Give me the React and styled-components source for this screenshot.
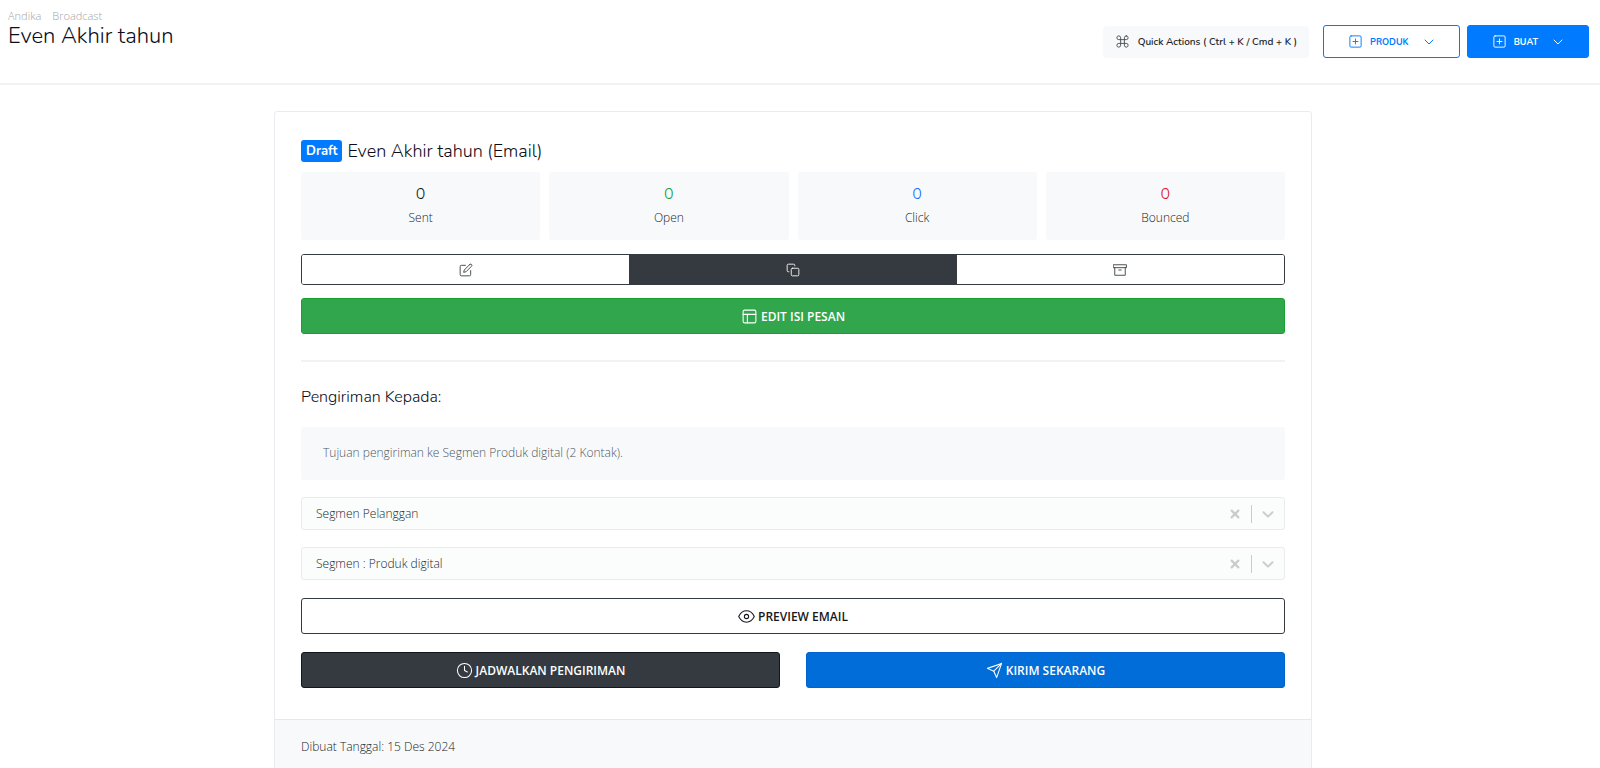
import { useState } from "react";
import styled, { createGlobalStyle } from "styled-components";
import {
  FiArchive,
  FiChevronDown,
  FiClock,
  FiCommand,
  FiCopy,
  FiEdit,
  FiEye,
  FiLayout,
  FiPlusSquare,
  FiSend,
} from "react-icons/fi";

const GlobalStyle = createGlobalStyle`
  * { box-sizing: border-box; }
  body {
    margin: 0;
    background: #fff;
    color: #212529;
    font-family: "Open Sans", "Noto Sans", sans-serif;
    font-size: 12px;
    font-weight: 300;
    line-height: 18px;
  }
  h1, h2, h3, p { margin: 0; }
  button, select { font-family: inherit; }
  button { cursor: pointer; }
  svg { display: block; flex: none; }
`;

const headingFont = `"Nunito", "Open Sans", sans-serif`;

const Header = styled.header`
  display: flex;
  justify-content: space-between;
  align-items: flex-start;
  padding: 8px 11px 25px 8px;
  border-bottom: 2px solid #f1f3f6;
`;
const Breadcrumb = styled.nav`
  display: flex;
  gap: 11px;
  font-size: 11px;
  line-height: 16px;

  & > a { color: #a3a4a8; text-decoration: none; }
`;
const PageTitle = styled.h1`
  font-family: ${headingFont};
  font-size: 22px;
  line-height: 24px;
  font-weight: 300;
  color: #0b0c18;
`;
const HeaderActions = styled.div`
  display: flex;
  align-items: center;
  padding-top: 17px;
`;
const QuickButton = styled.button`
  display: flex;
  align-items: center;
  gap: 8px;
  height: 32px;
  margin-right: 14px;
  padding: 0 12px;
  border: 0;
  border-radius: 4px;
  background: #f8f9fa;
  color: #212529;
  font-family: ${headingFont};
  font-size: 10px;
  font-weight: 600;

  & > svg { color: #495057; }
`;
const MenuButton = styled.button`
  display: flex;
  align-items: center;
  gap: 7px;
  height: 33px;
  margin-left: ${p => p.$filled ? '7px' : '0'};
  padding: 0 22px 0 24px;
  border: 1px solid #007bff;
  border-radius: 3px;
  background: ${p => p.$filled ? '#007bff' : '#fff'};
  color: ${p => p.$filled ? '#fff' : '#007bff'};
  font-family: ${headingFont};
  font-size: 9px;
  font-weight: 700;

  & > svg:last-child { margin-left: 5px; }
`;

const Main = styled.main`
  padding: 26px 14px 0 0;
`;
const Card = styled.section`
  max-width: 1038px;
  margin: 0 auto;
  border: 1px solid #e8ebf0;
  border-radius: 3px;
`;
const CardBody = styled.div`
  padding: 24px 26px 31px;
`;
const TitleRow = styled.div`
  display: flex;
  align-items: center;
  gap: 5px;
  height: 30px;
`;
const Badge = styled.span`
  padding: 2px 5px;
  border-radius: 3px;
  background: #007bff;
  color: #fff;
  font-family: ${headingFont};
  font-size: 13px;
  font-weight: 700;
`;
const CardTitle = styled.h2`
  font-family: ${headingFont};
  font-size: 18px;
  line-height: 24px;
  font-weight: 300;
  color: #0b0c18;
`;
const Stats = styled.div`
  display: grid;
  grid-template-columns: repeat(4, 1fr);
  gap: 9px;
  margin-top: 6px;
`;
const Stat = styled.div`
  height: 68px;
  padding-top: 10px;
  border-radius: 3px;
  background: #f8f9fb;
  text-align: center;
`;
const StatValue = styled.p`
  font-family: ${headingFont};
  font-size: 16px;
  line-height: 24px;
  color: ${p => p.$color};
`;
const StatLabel = styled.p`
  margin-top: 3px;
`;
const ButtonGroup = styled.div`
  display: grid;
  grid-template-columns: repeat(3, 1fr);
  height: 31px;
  margin-top: 14px;
  border: 1px solid #343a40;
  border-radius: 3px;
  overflow: hidden;
`;
const GroupButton = styled.button`
  display: flex;
  align-items: center;
  justify-content: center;
  padding: 0;
  border: 0;
  background: ${p => p.$active ? '#343a40' : '#fff'};
  color: ${p => p.$active ? '#fff' : '#343a40'};
`;

const tones = {
  success: { bg: '#31a64c', border: '#16a02c', color: '#fff' },
  outline: { bg: '#fff', border: '#343a40', color: '#16181b' },
  dark: { bg: '#343a40', border: '#14171c', color: '#fff' },
  primary: { bg: '#006dd9', border: '#0064d0', color: '#fff' },
};
const WideButton = styled.button`
  display: flex;
  align-items: center;
  justify-content: center;
  gap: 3px;
  width: 100%;
  height: 36px;
  padding: 0;
  border: 1px solid ${p => tones[p.$tone].border};
  border-radius: 3px;
  background: ${p => tones[p.$tone].bg};
  color: ${p => tones[p.$tone].color};
  font-size: 12px;
  font-weight: 600;
`;
const EditRow = styled.div`
  margin-top: 13px;
  padding-bottom: 26px;
  border-bottom: 2px solid #f1f2f4;
`;
const SectionTitle = styled.h3`
  margin: 24px 0 19px;
  font-family: ${headingFont};
  font-size: 16px;
  line-height: 22px;
  font-weight: 300;
  color: #0b0c18;
`;
const Notice = styled.p`
  padding: 17px 22px 18px;
  border-radius: 3px;
  background: #f8f9fb;
  color: #4f575e;
`;
const SelectBox = styled.div`
  display: flex;
  align-items: center;
  gap: 6px;
  height: 33px;
  margin-top: 17px;
  padding-right: 6px;
  border: 1px solid #e9ebed;
  border-radius: 3px;
  background: #fbfdfc;
  color: #ccc;
`;
const Select = styled.select`
  flex: 1;
  min-width: 0;
  height: 100%;
  padding: 0 0 0 14px;
  border: 0;
  appearance: none;
  background: transparent;
  color: #212529;
  font-size: 12px;
  font-weight: 300;
`;
const ClearButton = styled.button`
  padding: 0;
  border: 0;
  background: none;
  color: inherit;
`;
const Separator = styled.span`
  width: 1px;
  height: 18px;
  background: #ccc;
`;
const Actions = styled.div`
  display: grid;
  grid-template-columns: repeat(2, 1fr);
  gap: 18px 26px;
  margin-top: 18px;

  & > :first-child { grid-column: 1 / -1; }
`;
const CardFooter = styled.footer`
  padding: 18px 26px;
  border-top: 1px solid #e4e8ec;
  background: #f8f9fb;
`;

const stats = [
  { label: 'Sent', value: 0, color: '#16181b' },
  { label: 'Open', value: 0, color: '#16a02c' },
  { label: 'Click', value: 0, color: '#1a6dff' },
  { label: 'Bounced', value: 0, color: '#dc1420' },
];

function SegmentSelect({ label, option }) {
  const [value, setValue] = useState(option);

  return (
    <SelectBox>
      <Select aria-label={label} value={value} onChange={(e) => setValue(e.target.value)}>
        <option value="" />
        <option value={option}>{option}</option>
      </Select>
      <ClearButton type="button" aria-label="Hapus" onClick={() => setValue('')}>
        <svg width="20" height="20" viewBox="0 0 20 20" fill="none" stroke="currentColor" strokeWidth="2.2" strokeLinecap="round">
          <path d="M6.6 6.6l6.8 6.8M13.4 6.6l-6.8 6.8" />
        </svg>
      </ClearButton>
      <Separator />
      <svg width="20" height="20" viewBox="0 0 20 20" fill="none" stroke="currentColor" strokeWidth="2" strokeLinecap="round" strokeLinejoin="round">
        <path d="M5.5 8.3l4.5 4.3 4.5-4.3" />
      </svg>
    </SelectBox>
  );
}

function App() {
  return (
    <>
      <GlobalStyle />
      <Header>
        <div>
          <Breadcrumb>
            <a href="#andika">Andika</a>
            <a href="#broadcast">Broadcast</a>
          </Breadcrumb>
          <PageTitle>Even Akhir tahun</PageTitle>
        </div>
        <HeaderActions>
          <QuickButton type="button">
            <FiCommand size={15} strokeWidth={1.5} />
            Quick Actions ( Ctrl + K / Cmd + K )
          </QuickButton>
          <MenuButton type="button">
            <FiPlusSquare size={15} strokeWidth={1.5} />
            PRODUK
            <FiChevronDown size={16} strokeWidth={1.5} />
          </MenuButton>
          <MenuButton type="button" $filled>
            <FiPlusSquare size={15} strokeWidth={1.5} />
            BUAT
            <FiChevronDown size={16} strokeWidth={1.5} />
          </MenuButton>
        </HeaderActions>
      </Header>

      <Main>
        <Card>
          <CardBody>
            <TitleRow>
              <Badge>Draft</Badge>
              <CardTitle>Even Akhir tahun (Email)</CardTitle>
            </TitleRow>

            <Stats>
              {stats.map((s) => (
                <Stat key={s.label}>
                  <StatValue $color={s.color}>{s.value}</StatValue>
                  <StatLabel>{s.label}</StatLabel>
                </Stat>
              ))}
            </Stats>

            <ButtonGroup>
              <GroupButton type="button" aria-label="Edit"><FiEdit size={14} strokeWidth={1.5} /></GroupButton>
              <GroupButton type="button" aria-label="Salin" $active><FiCopy size={14} strokeWidth={1.5} /></GroupButton>
              <GroupButton type="button" aria-label="Arsip"><FiArchive size={14} strokeWidth={1.5} /></GroupButton>
            </ButtonGroup>

            <EditRow>
              <WideButton type="button" $tone="success">
                <FiLayout size={17} strokeWidth={1.5} />
                EDIT ISI PESAN
              </WideButton>
            </EditRow>

            <SectionTitle>Pengiriman Kepada:</SectionTitle>
            <Notice>Tujuan pengiriman ke Segmen Produk digital (2 Kontak).</Notice>
            <SegmentSelect label="Tujuan" option="Segmen Pelanggan" />
            <SegmentSelect label="Segmen" option="Segmen : Produk digital" />

            <Actions>
              <WideButton type="button" $tone="outline">
                <FiEye size={17} strokeWidth={1.5} />
                PREVIEW EMAIL
              </WideButton>
              <WideButton type="button" $tone="dark">
                <FiClock size={17} strokeWidth={1.5} />
                JADWALKAN PENGIRIMAN
              </WideButton>
              <WideButton type="button" $tone="primary">
                <FiSend size={17} strokeWidth={1.5} />
                KIRIM SEKARANG
              </WideButton>
            </Actions>
          </CardBody>
          <CardFooter>Dibuat Tanggal: 15 Des 2024</CardFooter>
        </Card>
      </Main>
    </>
  );
}

export default App;
